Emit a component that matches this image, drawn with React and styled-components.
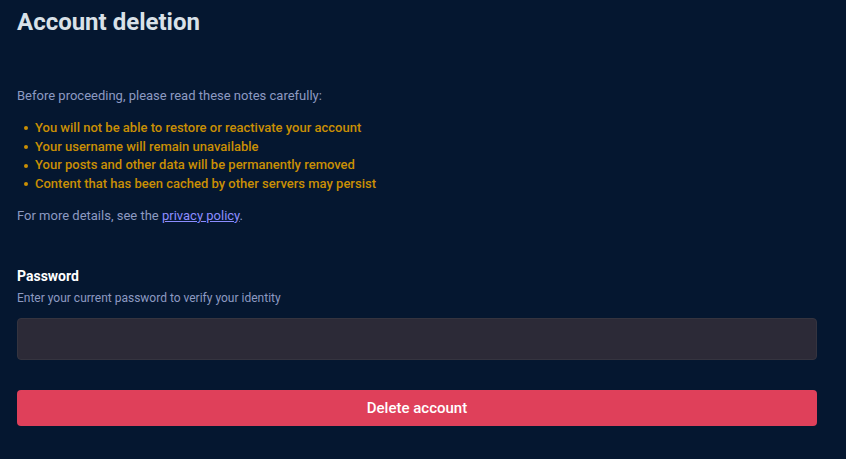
import styled, { createGlobalStyle } from "styled-components";

const GlobalStyle = createGlobalStyle`
  html, body {
    margin: 0;
    padding: 0;
    background: #051730;
  }
  body {
    font-family: Roboto, "Noto Sans", sans-serif;
    -webkit-font-smoothing: antialiased;
  }
`;

const Page = styled.main`
  width: 800px;
  padding: 0 17px 30px;
`;

const Title = styled.h1`
  margin: 0;
  padding-top: 7px;
  font-size: 24px;
  line-height: 30px;
  font-weight: 700;
  color: #d9e1e8;
`;

const Hint = styled.p`
  margin: ${(p) => p.$mt || 0}px 0 0;
  font-size: 13px;
  line-height: 19px;
  color: #8d9ac2;

  a {
    color: #8c8dff;
    text-decoration: underline;
  }
`;

const Warnings = styled.ul`
  margin: 14px 0 0;
  padding: 0;
  list-style: none;
`;

const Warning = styled.li`
  display: flex;
  align-items: center;
  gap: 7px;
  padding-left: 7px;
  font-size: 13px;
  line-height: 18.7px;
  font-weight: 500;
  color: #ca8f04;

  &::before {
    content: "";
    flex: none;
    width: 4px;
    height: 4px;
    border-radius: 50%;
    background: #ca8f04;
  }
`;

const Field = styled.div`
  margin-top: 42px;
  display: flex;
  flex-direction: column;
`;

const Label = styled.label`
  font-size: 14px;
  line-height: 18px;
  font-weight: 700;
  color: #ffffff;
`;

const FieldHint = styled.span`
  margin-top: 5px;
  font-size: 12px;
  line-height: 16px;
  color: #8d9ac2;
`;

const Input = styled.input`
  margin-top: 12px;
  box-sizing: border-box;
  height: 42px;
  width: 100%;
  border: 1px solid #35343f;
  border-radius: 4px;
  background: #2c2a37;
  color: #fff;
  padding: 10px;
  font: inherit;
  outline: none;
`;

const DangerButton = styled.button`
  margin-top: 30px;
  width: 100%;
  height: 36px;
  border: 0;
  border-radius: 4px;
  background: #df405a;
  color: #ffffff;
  font-family: inherit;
  font-size: 15px;
  font-weight: 500;
  cursor: pointer;
`;

const notes = [
  "You will not be able to restore or reactivate your account",
  "Your username will remain unavailable",
  "Your posts and other data will be permanently removed",
  "Content that has been cached by other servers may persist",
];

export default function App() {
  return (
    <>
      <GlobalStyle />
      <Page>
        <Title>Account deletion</Title>
        <Hint $mt={49}>Before proceeding, please read these notes carefully:</Hint>
        <Warnings>
          {notes.map((n) => (
            <Warning key={n}>{n}</Warning>
          ))}
        </Warnings>
        <Hint $mt={12}>
          For more details, see the <a href="#">privacy policy</a>.
        </Hint>
        <Field>
          <Label htmlFor="password">Password</Label>
          <FieldHint>Enter your current password to verify your identity</FieldHint>
          <Input id="password" type="password" />
        </Field>
        <DangerButton type="button">Delete account</DangerButton>
      </Page>
    </>
  );
}
